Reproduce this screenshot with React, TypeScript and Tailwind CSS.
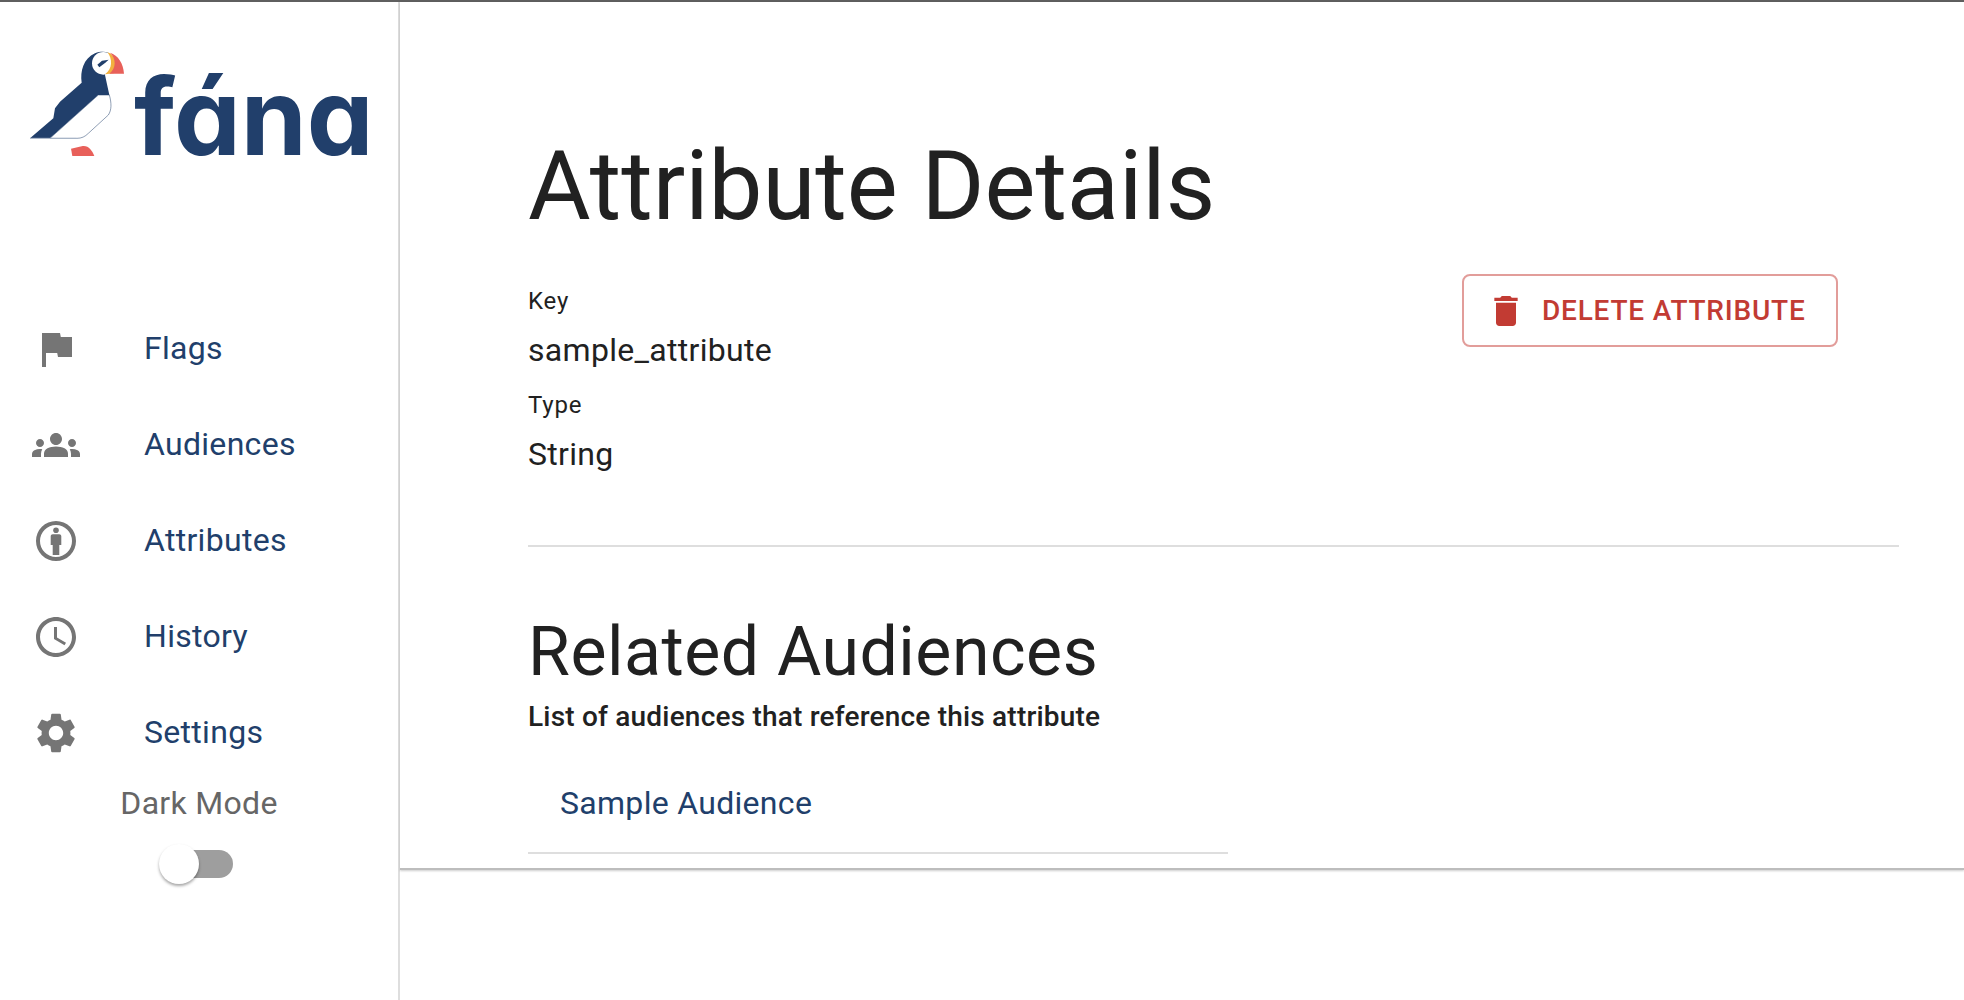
import React from "react";

const NAV_ICONS: Record<string, React.ReactNode> = {
  flag: <path d="M14.4 6L14 4H5v17h2v-7h5.6l.4 2h7V6z" />,
  groups: (
    <path d="M12 12.75c1.63 0 3.07.39 4.24.9 1.08.48 1.76 1.56 1.76 2.73V18H6v-1.61c0-1.18.68-2.26 1.76-2.73 1.17-.52 2.61-.91 4.24-.91zM4 13c1.1 0 2-.9 2-2s-.9-2-2-2-2 .9-2 2 .9 2 2 2zm1.13 1.1c-.37-.06-.74-.1-1.13-.1-.99 0-1.93.21-2.78.58C.36 14.96 0 15.74 0 16.62V18h4.5v-1.61c0-.83.23-1.61.63-2.29zM20 13c1.1 0 2-.9 2-2s-.9-2-2-2-2 .9-2 2 .9 2 2 2zm4 3.62c0-.88-.36-1.66-1.22-2.04-.85-.37-1.79-.58-2.78-.58-.39 0-.76.04-1.13.1.4.68.63 1.46.63 2.29V18H24v-1.38zM12 6c1.66 0 3 1.34 3 3s-1.34 3-3 3-3-1.34-3-3 1.34-3 3-3z" />
  ),
  person: (
    <>
      <path
        fillRule="evenodd"
        d="M12 2a10 10 0 1 0 0 20 10 10 0 0 0 0-20zm0 2a8 8 0 1 1 0 16 8 8 0 0 1 0-16z"
      />
      <circle cx="12" cy="6.6" r="1.4" />
      <path d="M10.4 8.6h3.2c.6 0 1.05.45 1.05 1.05V14h-1v5h-3.3v-5h-1V9.65c0-.6.45-1.05 1.05-1.05z" />
    </>
  ),
  clock: (
    <>
      <path d="M11.99 2C6.47 2 2 6.48 2 12s4.47 10 9.99 10C17.52 22 22 17.52 22 12S17.52 2 11.99 2zM12 20c-4.42 0-8-3.58-8-8s3.58-8 8-8 8 3.58 8 8-3.58 8-8 8z" />
      <path d="M12.5 7H11v6l5.25 3.15.75-1.23-4.5-2.67z" />
    </>
  ),
  gear: (
    <path d="M19.14,12.94c0.04-0.3,0.06-0.61,0.06-0.94c0-0.32-0.02-0.64-0.07-0.94l2.03-1.58c0.18-0.14,0.23-0.41,0.12-0.61 l-1.92-3.32c-0.12-0.22-0.37-0.29-0.59-0.22l-2.39,0.96c-0.5-0.38-1.03-0.7-1.62-0.94L14.4,2.81c-0.04-0.24-0.24-0.41-0.48-0.41 h-3.84c-0.24,0-0.43,0.17-0.47,0.41L9.25,5.35C8.66,5.59,8.12,5.92,7.63,6.29L5.24,5.33c-0.22-0.08-0.47,0-0.59,0.22L2.74,8.87 C2.62,9.08,2.66,9.34,2.86,9.48l2.03,1.58C4.84,11.36,4.8,11.69,4.8,12s0.02,0.64,0.07,0.94l-2.03,1.58 c-0.18,0.14-0.23,0.41-0.12,0.61l1.92,3.32c0.12,0.22,0.37,0.29,0.59,0.22l2.39-0.96c0.5,0.38,1.03,0.7,1.62,0.94l0.36,2.54 c0.05,0.24,0.24,0.41,0.48,0.41h3.84c0.24,0,0.44-0.17,0.47-0.41l0.36-2.54c0.59-0.24,1.13-0.56,1.62-0.94l2.39,0.96 c0.22,0.08,0.47,0,0.59-0.22l1.92-3.32c0.12-0.22,0.07-0.47-0.12-0.61L19.14,12.94z M12,15.6c-1.98,0-3.6-1.62-3.6-3.6 s1.62-3.6,3.6-3.6s3.6,1.62,3.6,3.6S13.98,15.6,12,15.6z" />
  ),
};

const navItems = [
  { label: "Flags", icon: "flag" },
  { label: "Audiences", icon: "groups" },
  { label: "Attributes", icon: "person" },
  { label: "History", icon: "clock" },
  { label: "Settings", icon: "gear" },
];

function Puffin() {
  return (
    <svg viewBox="0 0 390 390" className="w-[130px] h-[130px] shrink-0">
      <path
        d="M30 295L100 235L105 205L120 185L185 128C180 95 190 55 225 40C240 34 255 35 265 38L255 105L268 165L235 165L90 295Z"
        fill="#213f6b"
      />
      <path
        d="M268 165C275 190 275 210 265 225L205 280C195 290 185 295 170 295L90 295L235 165Z"
        fill="#fff"
        stroke="#213f6b"
        strokeWidth="1.5"
      />
      <path d="M30 295H170" stroke="#a9b6c8" strokeWidth="3" />
      <circle cx="250" cy="70" r="34" fill="#fff" />
      <path d="M232 74L246 62L266 59L256 68L238 82Z" fill="#213f6b" />
      <path d="M262 37C285 42 295 75 282 100L255 103C278 88 278 55 262 37Z" fill="#f2b13f" />
      <path d="M270 38C295 46 310 70 312 101L268 101C288 85 290 58 270 38Z" fill="#e8605a" />
      <path d="M153 326L185 319C205 315 215 330 223 348L157 348Z" fill="#e8605a" />
    </svg>
  );
}

function NavRow({ label, icon }: { label: string; icon: string }) {
  return (
    <div className="h-[96px] flex items-center pl-[32px]">
      <svg viewBox="0 0 24 24" className="w-[48px] h-[48px] fill-[#757575] shrink-0">
        {NAV_ICONS[icon]}
      </svg>
      <span className="ml-[64px] text-[32px] leading-[48px] -mt-[2px] tracking-[0.3px] text-[#213f6b]">{label}</span>
    </div>
  );
}

export default function App() {
  return (
    <div className="min-h-screen flex border-t-2 border-[#5f5f5f] bg-white font-['Roboto',sans-serif] text-[#212121]">
      {/* left */}
      <aside className="w-[400px] h-[998px] shrink-0 border-r-2 border-[#dedede]">
        <div className="flex items-start pl-[20px] pt-[38px] h-[299px]">
          <Puffin />
          <span className="-ml-[16px] mt-[9px] font-['Inter',sans-serif] font-bold text-[106px] leading-[136px] text-[#213f6b] [font-feature-settings:'cv11']">
            fána
          </span>
        </div>
        {navItems.map((item) => (
          <NavRow key={item.label} label={item.label} icon={item.icon} />
        ))}
        <div className="text-center mt-[4px] text-[32px] leading-[36px] tracking-[0.3px] text-[#666666]">
          Dark Mode
        </div>
        <div className="relative w-[68px] h-[28px] ml-[165px] mt-[29px] rounded-full bg-[#9e9e9e]">
          <div className="absolute -left-[6px] -top-[6px] w-[40px] h-[40px] rounded-full bg-white shadow-[0_2px_3px_rgba(0,0,0,0.35)]" />
        </div>
      </aside>
      {/* main */}
      <main className="flex-1">
        <div className="pl-[128px] pr-[65px] pt-[128px] pb-[14px] border-b-2 border-[#bdbdbd] shadow-[0_1px_2px_rgba(0,0,0,0.2)]">
          <h1 className="text-[96px] leading-[112px] font-normal">Attribute Details</h1>
          <div className="flex justify-between items-start mt-[32px] pb-[60px] border-b-2 border-[#dedede]">
            <div className="pt-[9px]">
              <div className="text-[24px] leading-[36px] tracking-[0.8px]">Key</div>
              <div className="text-[32px] leading-[62px] tracking-[0.3px]">sample_attribute</div>
              <div className="mt-[6px] text-[24px] leading-[36px] tracking-[0.8px]">Type</div>
              <div className="text-[32px] leading-[62px] tracking-[0.3px]">String</div>
            </div>
            <button className="mr-[61px] h-[73px] w-[376px] flex items-center pl-[22px] border-2 border-[#e29d9a] rounded-[8px] text-[#c23b33]">
              <svg viewBox="0 0 24 24" className="w-[40px] h-[40px] fill-current shrink-0">
                <path d="M6 19c0 1.1.9 2 2 2h8c1.1 0 2-.9 2-2V7H6v12zM19 4h-3.5l-1-1h-5l-1 1H5v2h14V4z" />
              </svg>
              <span className="ml-[16px] text-[28px] font-medium tracking-[0.8px]">DELETE ATTRIBUTE</span>
            </button>
          </div>
          <h2 className="mt-[65px] text-[68px] leading-[80px] tracking-[0.5px] font-normal">Related Audiences</h2>
          <p className="mt-[5px] text-[28px] leading-[40px] font-medium tracking-[0.2px]">
            List of audiences that reference this attribute
          </p>
          <div className="mt-[31px] w-[700px] pl-[32px] pb-[14px] border-b-2 border-[#dedede] text-[32px] leading-[70px] tracking-[0.3px] text-[#213f6b]">
            Sample Audience
          </div>
        </div>
      </main>
    </div>
  );
}
